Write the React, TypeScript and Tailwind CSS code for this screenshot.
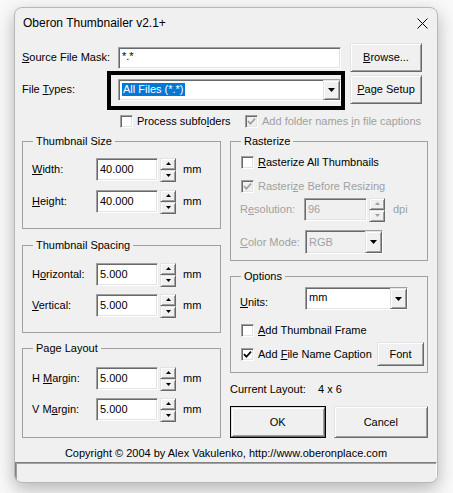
import React from "react";

const sunken =
  "border border-t-[#a0a0a0] border-l-[#a0a0a0] border-b-white border-r-white shadow-[inset_1px_1px_0_#696969,inset_-1px_-1px_0_#e3e3e3]";
const raised =
  "border border-t-[#e3e3e3] border-l-[#e3e3e3] border-b-[#696969] border-r-[#696969] shadow-[inset_1px_1px_0_#ffffff,inset_-1px_-1px_0_#a0a0a0]";

function Tri({ up, big, gray }: { up?: boolean; big?: boolean; gray?: boolean }) {
  const w = big ? 7 : 5;
  const h = big ? 4 : 3;
  const pts = up ? `0,${h} ${w / 2},0 ${w},${h}` : `0,0 ${w},0 ${w / 2},${h}`;
  return (
    <svg width={w} height={h} viewBox={`0 0 ${w} ${h}`}>
      <polygon points={pts} fill={gray ? "#a0a0a0" : "#000"} />
    </svg>
  );
}

function Spin({ disabled }: { disabled?: boolean }) {
  return (
    <div className="ml-[2px] flex h-[24px] w-[16px] flex-col">
      <div className={`flex h-[12px] items-center justify-center bg-[#f0f0f0] ${raised}`}>
        <Tri up gray={disabled} />
      </div>
      <div className={`flex h-[12px] items-center justify-center bg-[#f0f0f0] ${raised}`}>
        <Tri gray={disabled} />
      </div>
    </div>
  );
}

function Field({ value, w, disabled }: { value: string; w: string; disabled?: boolean }) {
  return (
    <div
      className={`${w} flex h-[23px] items-center pl-[3px] ${sunken} ${
        disabled ? "bg-[#f0f0f0] text-[#a0a0a0]" : "bg-white text-black"
      }`}
    >
      {value}
    </div>
  );
}

function Select({
  children,
  w,
  h = "h-[22px]",
  disabled,
}: {
  children: React.ReactNode;
  w: string;
  h?: string;
  disabled?: boolean;
}) {
  return (
    <div className={`${w} ${h} flex ${sunken} ${disabled ? "bg-[#f0f0f0] text-[#a0a0a0]" : "bg-white"}`}>
      <div className="flex flex-1 items-center pl-[3px]">{children}</div>
      <div className={`flex w-[17px] items-center justify-center bg-[#f0f0f0] ${raised}`}>
        <Tri big />
      </div>
    </div>
  );
}

function Button({
  children,
  className = "",
  isDefault,
}: {
  children: React.ReactNode;
  className?: string;
  isDefault?: boolean;
}) {
  const inner = (
    <div className={`flex h-full w-full items-center justify-center bg-[#f0f0f0] ${raised}`}>{children}</div>
  );
  return isDefault ? (
    <div className={`border border-black ${className}`}>{inner}</div>
  ) : (
    <div className={className}>{inner}</div>
  );
}

function Check({
  checked,
  disabled,
  children,
  className = "",
}: {
  checked?: boolean;
  disabled?: boolean;
  children: React.ReactNode;
  className?: string;
}) {
  return (
    <div className={`flex h-[14px] items-center ${className}`}>
      <span
        className={`flex h-[13px] w-[13px] shrink-0 items-center justify-center ${sunken} ${
          disabled ? "bg-[#f0f0f0]" : "bg-white"
        }`}
      >
        {checked && (
          <svg width="9" height="9" viewBox="0 0 9 9">
            <path d="M1 4.2l2.4 2.5L8 1.6" stroke={disabled ? "#a0a0a0" : "#000"} strokeWidth="1.7" fill="none" />
          </svg>
        )}
      </span>
      <span className={`ml-[4px] whitespace-nowrap ${disabled ? "text-[#a0a0a0]" : "text-black"}`}>{children}</span>
    </div>
  );
}

function Group({
  title,
  className = "",
  children,
}: {
  title: string;
  className?: string;
  children: React.ReactNode;
}) {
  return (
    <fieldset className={`border border-[#a0a0a0] pb-0 pt-0 ${className}`}>
      <legend className="ml-[1px] px-[3px] leading-[13px]">{title}</legend>
      {children}
    </fieldset>
  );
}

function NumRow({ label, value, className = "" }: { label: React.ReactNode; value: string; className?: string }) {
  return (
    <div className={`flex h-[23px] items-center ${className}`}>
      <span className="w-[64px]">{label}</span>
      <Field value={value} w="w-[62px]" />
      <Spin />
      <span className="ml-[7px]">mm</span>
    </div>
  );
}

export default function App() {
  return (
    <div className="h-[493px] w-[453px] bg-[#f9f9f9] pl-[14px] pt-[7px] font-['Liberation_Sans',Arial,sans-serif] text-[11px] leading-[13px] text-black">
      <div className="flex h-[476px] w-[424px] flex-col overflow-hidden rounded-[8px] border border-[#b8b8b8] bg-[#f0f0f0] shadow-[0_6px_18px_rgba(0,0,0,0.28)]">
        {/* title bar */}
        <div className="flex h-[31px] shrink-0 items-center justify-between pl-[8px] pr-[9px]">
          <span className="text-[12px]">Oberon Thumbnailer v2.1+</span>
          <svg width="11" height="11" viewBox="0 0 11 11">
            <path d="M0.5 0.5L10.5 10.5M10.5 0.5L0.5 10.5" stroke="#000" strokeWidth="1" />
          </svg>
        </div>

        <div className="pl-[7px] pr-[9px]">
          {/* source mask */}
          <div className="mt-[4px] flex h-[29px] items-center">
            <span className="w-[96px]">
              <u>S</u>ource File Mask:
            </span>
            <div className={`flex h-[22px] w-[223px] items-start bg-white pl-[3px] pt-[2px] ${sunken}`}>*.*</div>
            <Button className="ml-[9px] h-[29px] w-[72px]">
              <span>
                <u>B</u>rowse...
              </span>
            </Button>
          </div>

          {/* file types */}
          <div className="relative mt-[3px] flex h-[29px] items-center">
            <span className="w-[96px]">
              File <u>T</u>ypes:
            </span>
            <Select w="w-[223px]">
              <span className="bg-[#0078d7] px-[1px] text-white">All Files (*.*)</span>
            </Select>
            <Button className="ml-[9px] h-[29px] w-[72px]">
              <span>
                <u>P</u>age Setup
              </span>
            </Button>
            <div className="pointer-events-none absolute left-[85px] top-[-4px] h-[39px] w-[238px] border-[4px] border-black" />
          </div>

          {/* checkboxes */}
          <div className="mt-[10px] flex">
            <Check className="ml-[98px] w-[125px]">
              Process subfo<u>l</u>ders
            </Check>
            <Check checked disabled>
              Add folder names <u>i</u>n file captions
            </Check>
          </div>

          <div className="mt-[7px] flex">
            {/* left column */}
            <div className="flex w-[199px] flex-col">
              <Group title="Thumbnail Size" className="h-[94px] px-[9px]">
                <NumRow className="mt-[10px]" label={<><u>W</u>idth:</>} value="40.000" />
                <NumRow className="mt-[9px]" label={<><u>H</u>eight:</>} value="40.000" />
              </Group>
              <Group title="Thumbnail Spacing" className="mt-[10px] h-[94px] px-[9px]">
                <NumRow className="mt-[11px]" label={<>H<u>o</u>rizontal:</>} value="5.000" />
                <NumRow className="mt-[8px]" label={<><u>V</u>ertical:</>} value="5.000" />
              </Group>
              <Group title="Page Layout" className="mt-[9px] h-[96px] px-[9px]">
                <NumRow className="mt-[12px]" label={<>H <u>M</u>argin:</>} value="5.000" />
                <NumRow className="mt-[8px]" label={<>V M<u>a</u>rgin:</>} value="5.000" />
              </Group>
            </div>

            {/* right column */}
            <div className="ml-[9px] flex w-[198px] flex-col">
              <Group title="Rasterize" className="h-[126px] pl-[9px] pr-[3px]">
                <Check className="mt-[7px] ml-[1px]">
                  <u>R</u>asterize All Thumbnails
                </Check>
                <Check className="mt-[10px] ml-[1px]" checked disabled>
                  Rasteri<u>z</u>e Before Resizing
                </Check>
                <div className="mt-[5px] flex h-[23px] items-center text-[#a0a0a0]">
                  <span className="w-[64px]">
                    R<u>e</u>solution:
                  </span>
                  <Field value="96" w="w-[63px]" disabled />
                  <Spin disabled />
                  <span className="ml-[8px]">dpi</span>
                </div>
                <div className="mt-[9px] flex h-[24px] items-center">
                  <span className="w-[65px] text-[#a0a0a0]">
                    <u>C</u>olor Mode:
                  </span>
                  <Select w="w-[78px]" h="h-[24px]" disabled>
                    RGB
                  </Select>
                </div>
              </Group>

              <Group title="Options" className="mt-[9px] h-[103px] pl-[9px] pr-[3px]">
                <div className="mt-[4px] flex h-[23px] items-center">
                  <span className="mt-[8px] w-[65px]">
                    <u>U</u>nits:
                  </span>
                  <Select w="w-[103px]" h="h-[23px]">
                    <span className="self-start pt-[3px]">mm</span>
                  </Select>
                </div>
                <Check className="mt-[13px] ml-[1px]">
                  <u>A</u>dd Thumbnail Frame
                </Check>
                <div className="mt-[5px] flex h-[24px] items-center">
                  <Check className="ml-[1px]" checked>
                    Add <u>F</u>ile Name Caption
                  </Check>
                  <Button className="ml-auto h-[24px] w-[47px]">Font</Button>
                </div>
              </Group>

              <div className="mt-[9px] flex h-[14px] items-center">
                <span className="w-[88px]">Current Layout:</span>
                <span>4 x 6</span>
              </div>

              <div className="mt-[10px] flex h-[32px]">
                <Button isDefault className="h-[32px] w-[96px]">
                  OK
                </Button>
                <Button className="ml-[8px] h-[32px] w-[95px]">Cancel</Button>
              </div>
            </div>
          </div>
        </div>

        <div className="mt-[8px] flex h-[14px] items-center justify-center">
          Copyright © 2004 by Alex Vakulenko, http://www.oberonplace.com
        </div>

        <div className="mt-[2px] flex-1 border-l border-r border-t border-l-[#808080] border-r-white border-t-[#808080] shadow-[inset_1px_1px_0_#a0a0a0]" />
      </div>
    </div>
  );
}
